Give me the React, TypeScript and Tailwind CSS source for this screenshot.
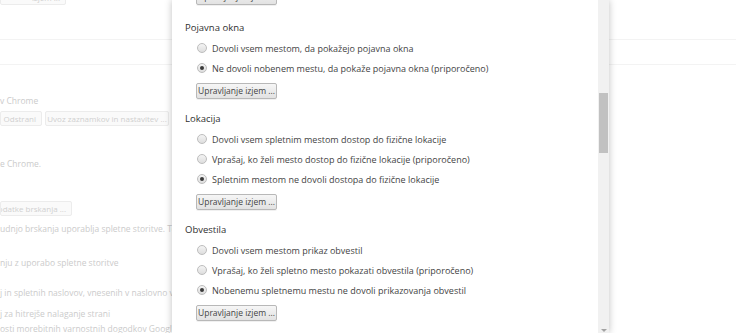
import React from "react";

type Section = {
  title: string;
  options: string[];
  selected: number;
};

const sections: Section[] = [
  {
    title: "Pojavna okna",
    options: [
      "Dovoli vsem mestom, da pokažejo pojavna okna",
      "Ne dovoli nobenem mestu, da pokaže pojavna okna (priporočeno)",
    ],
    selected: 1,
  },
  {
    title: "Lokacija",
    options: [
      "Dovoli vsem spletnim mestom dostop do fizične lokacije",
      "Vprašaj, ko želi mesto dostop do fizične lokacije (priporočeno)",
      "Spletnim mestom ne dovoli dostopa do fizične lokacije",
    ],
    selected: 2,
  },
  {
    title: "Obvestila",
    options: [
      "Dovoli vsem mestom prikaz obvestil",
      "Vprašaj, ko želi spletno mesto pokazati obvestila (priporočeno)",
      "Nobenemu spletnemu mestu ne dovoli prikazovanja obvestil",
    ],
    selected: 2,
  },
];

function ExceptionsButton() {
  return (
    <button className="flex h-[16px] w-[81px] items-center justify-center whitespace-nowrap rounded-[2px] border border-[#b8b8b8] bg-gradient-to-b from-[#f6f6f6] to-[#e2e2e2] text-[8.5px] leading-none text-[#444] shadow-[0_1px_0_rgba(0,0,0,0.06)]">
      Upravljanje izjem ...
    </button>
  );
}

function Radio({ checked }: { checked: boolean }) {
  return (
    <span className="flex h-[10px] w-[10px] shrink-0 items-center justify-center rounded-full border border-[#bdbdbd] bg-gradient-to-b from-[#f4f4f4] to-[#dedede]">
      {checked && <span className="h-[4px] w-[4px] rounded-full bg-[#3a3a3a]" />}
    </span>
  );
}

function SettingsSection({ section }: { section: Section }) {
  return (
    <div className="flex flex-col">
      <div className="flex h-[20px] items-center text-[9.5px] leading-none text-[#303030]">
        {section.title}
      </div>
      {section.options.map((opt, i) => (
        <div key={opt} className="flex h-[20px] items-center gap-[5px] pl-[12px] text-[9px] leading-none text-[#444]">
          <Radio checked={i === section.selected} />
          <span className="whitespace-nowrap">{opt}</span>
        </div>
      ))}
      <div className="mt-[5px] flex pl-[11px]">
        <ExceptionsButton />
      </div>
    </div>
  );
}

function BgButton({ children, className = "" }: { children: React.ReactNode; className?: string }) {
  return (
    <div className={`flex h-[15px] shrink-0 items-center overflow-hidden whitespace-nowrap rounded-[2px] border border-[#ececec] bg-[#fafafa] px-[5px] text-[8px] leading-none text-[#d0d0d0] ${className}`}>
      {children}
    </div>
  );
}

function BackgroundPage() {
  return (
    <div className="flex flex-col text-[8.5px] text-[#cbcbcb]">
      <BgButton className="-mt-[10px] w-[66px] justify-end">izjem ...</BgButton>
      <div className="mt-[34px] h-px bg-[#f3f3f3]" />
      <div className="mt-[24px] h-px bg-[#f3f3f3]" />
      <div className="mt-[30px] h-[12px] leading-[12px]">v Chrome</div>
      <div className="mt-[4px] flex gap-[3px]">
        <BgButton className="w-[42px] justify-end">Odstrani</BgButton>
        <BgButton className="w-[124px] justify-center">Uvoz zaznamkov in nastavitev ...</BgButton>
      </div>
      <div className="mt-[32px] h-[12px] leading-[12px]">e Chrome.</div>
      <BgButton className="mt-[31px] w-[72px] justify-end">podatke brskanja ...</BgButton>
      <div className="mt-[7px] h-[12px] whitespace-nowrap leading-[12px]">
        udnjo brskanja uporablja spletne storitve. Te storitve
      </div>
      <div className="mt-[22px] h-[12px] whitespace-nowrap leading-[12px]">
        nju z uporabo spletne storitve
      </div>
      <div className="mt-[18px] h-[12px] whitespace-nowrap leading-[12px]">
        j in spletnih naslovov, vnesenih v naslovno vrstico
      </div>
      <div className="mt-[9px] h-[12px] whitespace-nowrap leading-[12px]">
        j za hitrejše nalaganje strani
      </div>
      <div className="mt-[3px] h-[12px] whitespace-nowrap leading-[12px]">
        osti morebitnih varnostnih dogodkov Google
      </div>
    </div>
  );
}

export default function App() {
  return (
    <div
      className="relative h-[333px] w-[736px] overflow-hidden bg-white"
      style={{ fontFamily: '"Open Sans", "Noto Sans", sans-serif' }}
    >
      <BackgroundPage />

      {/* settings dialog */}
      <div className="absolute left-[172px] top-0 flex h-[333px] w-[437px] bg-white shadow-[0_0_7px_rgba(0,0,0,0.25)]">
        <div className="flex-1 overflow-hidden pl-[13px]">
          <div className="-mt-[11px] flex pl-[11px]">
            <ExceptionsButton />
          </div>
          <div className="mt-[13px] flex flex-col gap-[10px]">
            {sections.map((s) => (
              <SettingsSection key={s.title} section={s} />
            ))}
          </div>
        </div>
        {/* scrollbar */}
        <div className="relative w-[11px] bg-[#f1f1f1]">
          <div className="absolute left-[1px] right-[1px] top-[93px] h-[60px] bg-[#c1c1c1]" />
          <div className="absolute bottom-[1px] left-[3px] h-0 w-0 border-x-[3px] border-t-[3px] border-x-transparent border-t-[#a3a3a3]" />
        </div>
      </div>
    </div>
  );
}
